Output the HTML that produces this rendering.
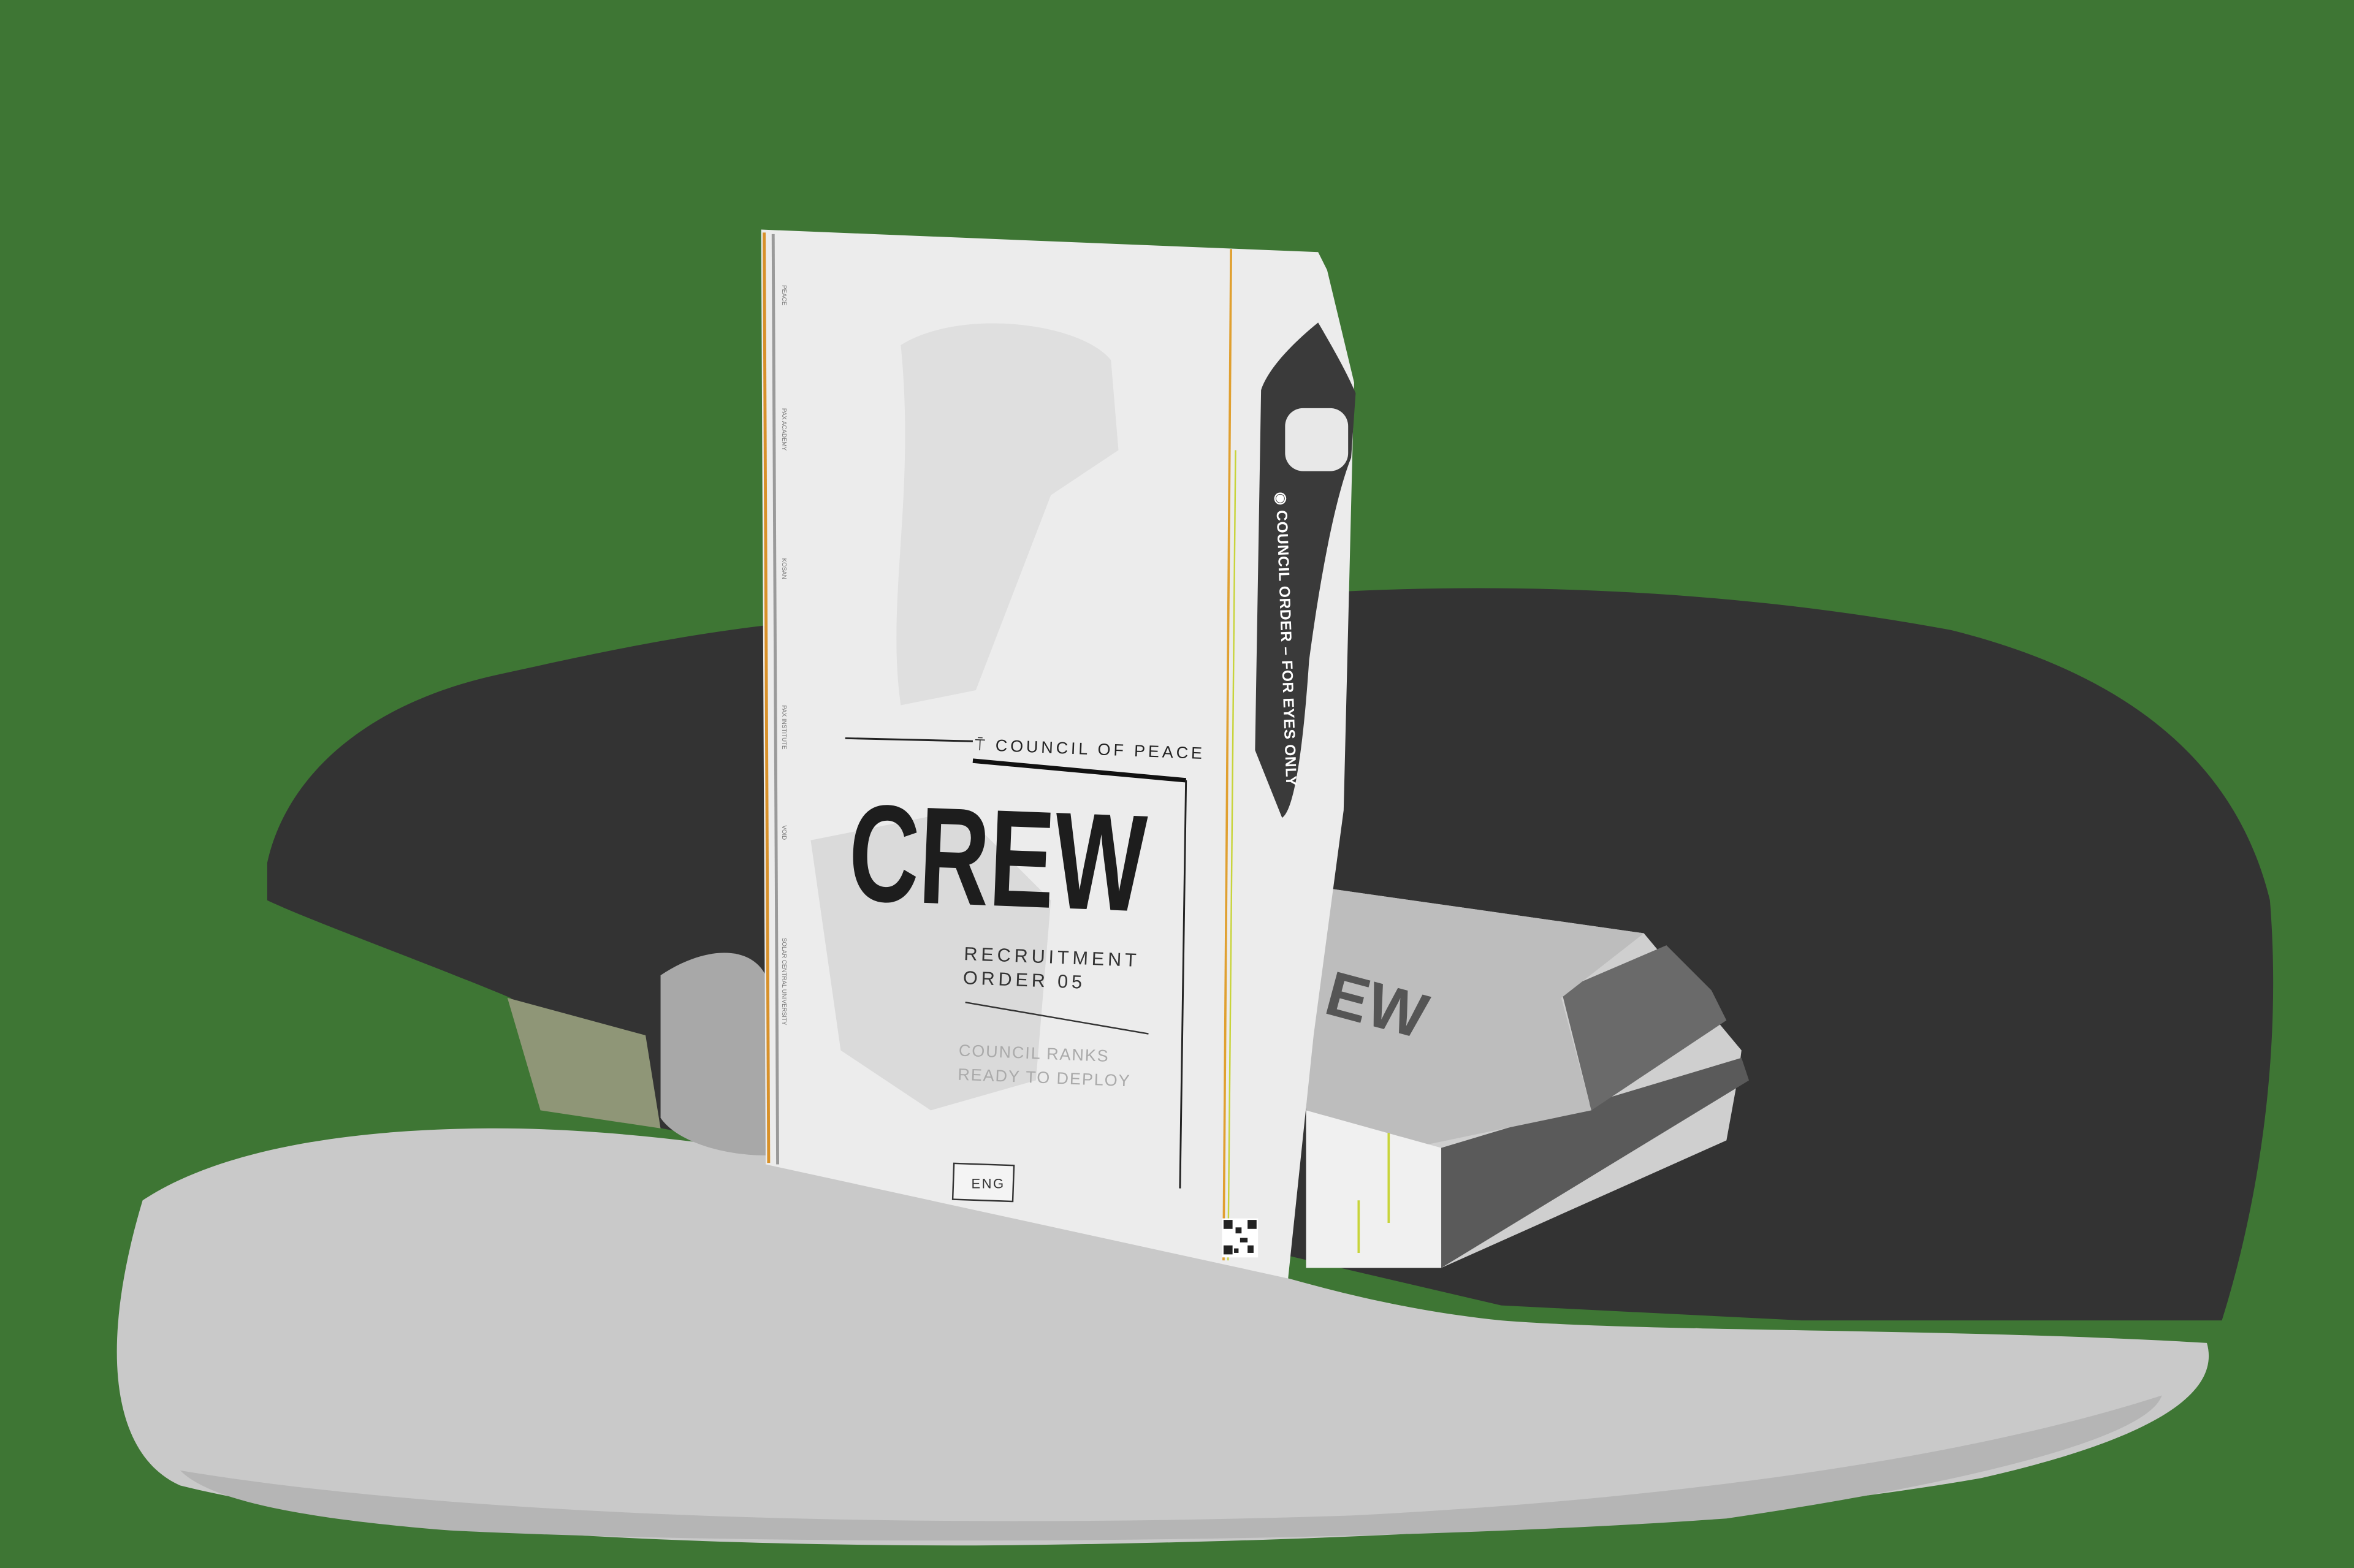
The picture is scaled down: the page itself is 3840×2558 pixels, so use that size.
<!DOCTYPE html>
<html><head><meta charset="utf-8"><style>
html,body{margin:0;padding:0;background:#3e7634;}
svg{display:block}
</style></head><body>
<svg width="3840" height="2558" viewBox="0 0 1568 1045" preserveAspectRatio="none" xmlns="http://www.w3.org/2000/svg" font-family="Liberation Sans, sans-serif">
<rect width="1568" height="1045" fill="#3e7634"/>
<path d="M178,575 C190,520 240,470 330,450 C420,430 480,418 560,412 L880,395 C1000,388 1150,392 1300,420 C1420,450 1490,510 1512,600 C1520,700 1505,800 1480,880 L1200,880 L1000,870 L700,800 L430,750 L340,665 C280,640 210,615 178,600 Z" fill="#333333"/>
<path d="M338,665 L430,690 L440,752 L360,740 Z" fill="#8f9677"/>
<path d="M1070,895 L1130,885 L1200,893 L1190,918 L1090,912 Z" fill="#9a9e7e"/>
<path d="M95,800 C140,770 220,752 330,752 C450,752 600,780 720,810 C820,840 900,870 1000,880 C1100,888 1300,885 1470,895 C1480,930 1430,960 1320,985 C1150,1015 900,1028 650,1030 C400,1030 220,1015 120,990 C75,970 65,900 95,800 Z" fill="#c9c9c9"/>
<path d="M120,980 C300,1010 600,1020 900,1010 C1100,1000 1300,975 1440,930 C1430,960 1300,990 1150,1012 C900,1030 500,1030 300,1020 C200,1012 140,1000 120,980 Z" fill="#b5b5b5"/>
<path d="M440,650 C470,630 500,630 510,650 L510,770 C480,770 450,760 440,745 Z" fill="#a8a8a8"/>
<path d="M870,590 L1095,622 L1160,700 L1158,716 L1150,760 L960,845 L870,845 Z" fill="#cfcfcf"/>
<path d="M960,765 L1160,705 L1165,720 L960,845 Z" fill="#5a5a5a"/>
<path d="M1040,660 L1110,630 L1140,660 L1150,680 L1060,740 Z" fill="#6a6a6a"/>
<path d="M870,590 L1095,622 L1040,665 L1060,740 L940,765 L870,760 Z" fill="#bdbdbd"/>
<path d="M870,740 L960,765 L960,845 L870,845 Z" fill="#f0f0f0"/>
<path d="M925,755 L925,815 M905,800 L905,835" stroke="#c8d43a" stroke-width="1.5"/>
<text x="880" y="680" font-size="42" font-weight="bold" fill="#555" transform="rotate(15 900 680)">EW</text>
<path d="M507,153 L878,168 L884,180 L902,255 L895,540 L875,690 L858,852 L510,776 Z" fill="#ececec"/>
<path d="M878,215 C888,232 897,248 903,262 L900,305 C890,330 880,380 872,440 C868,500 862,540 854,545 L836,500 L840,260 C845,245 862,228 878,215 Z" fill="#3a3a3a"/>
<rect x="856" y="272" width="42" height="42" rx="12" fill="#e8e8e8"/>
<text transform="translate(850,328) rotate(88)" font-size="10" font-weight="bold" fill="#fff" letter-spacing="0.3">◉ COUNCIL ORDER – FOR EYES ONLY</text>
<path d="M600,230 C640,205 720,215 740,240 L745,300 L700,330 L650,460 L600,470 C590,400 610,330 600,230 Z" fill="#dfdfdf"/>
<path d="M540,560 L640,540 L700,600 L690,720 L620,740 L560,700 Z" fill="#dadada"/>
<path d="M509,155 L512,775" stroke="#d8912a" stroke-width="2"/>
<path d="M515,156 L518,776" stroke="#9a9a9a" stroke-width="2"/>
<path d="M820,166 L815,840" stroke="#e0a030" stroke-width="1.5"/>
<path d="M823,300 L818,840" stroke="#c8d43a" stroke-width="1"/>
<line x1="563" y1="492" x2="648" y2="494" stroke="#222" stroke-width="1.2"/>
<line x1="648" y1="507" x2="790" y2="520" stroke="#111" stroke-width="3"/>
<line x1="790" y1="520" x2="786" y2="792" stroke="#222" stroke-width="1.2"/>
<line x1="643" y1="668" x2="765" y2="689" stroke="#333" stroke-width="1"/>
<g transform="rotate(2.2 650 560)">
<text x="647" y="500" font-size="11" fill="#222" letter-spacing="2">⍑ COUNCIL OF PEACE</text>
<text x="566" y="603" font-size="92" font-weight="bold" fill="#1d1d1d" textLength="198" lengthAdjust="spacingAndGlyphs">CREW</text>
<text x="645" y="640" font-size="12.5" fill="#333" letter-spacing="2.4">RECRUITMENT</text>
<text x="645" y="656" font-size="12.5" fill="#333" letter-spacing="2.4">ORDER 05</text>
<text x="644" y="704" font-size="11" fill="#aaa" letter-spacing="0.8">COUNCIL RANKS</text>
<text x="644" y="720" font-size="11" fill="#aaa" letter-spacing="0.8">READY TO DEPLOY</text>
</g>
<rect x="635" y="776" width="40" height="24" fill="#f4f4f4" stroke="#333" stroke-width="1" transform="rotate(2 655 788)"/>
<text x="647" y="792" font-size="9" fill="#333" letter-spacing="1">ENG</text>
<g font-size="4" fill="#777">
<text transform="translate(521,190) rotate(90)">PEACE</text>
<text transform="translate(521,272) rotate(90)">PAX ACADEMY</text>
<text transform="translate(521,372) rotate(90)">KOSAN</text>
<text transform="translate(521,470) rotate(90)">PAX INSTITUTE</text>
<text transform="translate(521,550) rotate(90)">VOID</text>
<text transform="translate(521,625) rotate(90)">SOLAR CENTRAL UNIVERSITY</text>
</g>
<rect x="814" y="812" width="24" height="26" fill="#fff"/>
<g fill="#222"><rect x="815" y="813" width="6" height="6"/><rect x="831" y="813" width="6" height="6"/><rect x="815" y="830" width="6" height="6"/><rect x="823" y="818" width="4" height="4"/><rect x="826" y="825" width="5" height="3"/><rect x="831" y="830" width="4" height="5"/><rect x="822" y="832" width="3" height="3"/></g>
</svg>
</body></html>
